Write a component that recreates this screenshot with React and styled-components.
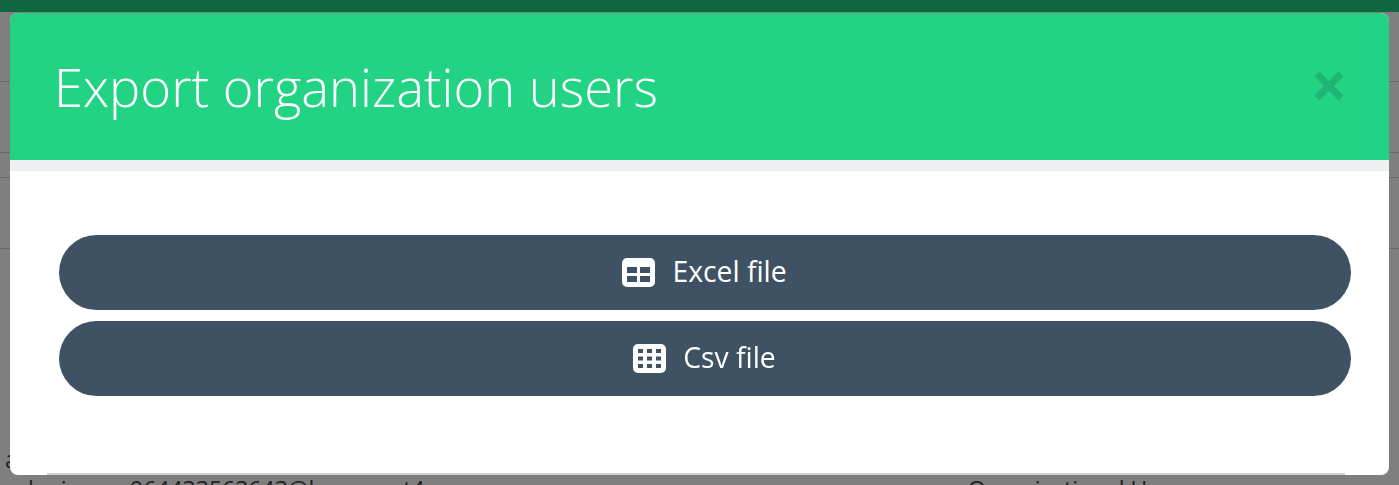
import React from "react";
import styled, { createGlobalStyle } from "styled-components";

const GlobalStyle = createGlobalStyle`
  html, body {
    margin: 0;
    height: 100%;
    overflow: hidden;
    background: #fff;
    font-family: "Open Sans", "Liberation Sans", sans-serif;
  }
`;

const Page = styled.div`
  height: 485px;
  overflow: hidden;
`;

const TopBar = styled.div`
  height: 12px;
  background: #20cc80;
`;

const BackRow = styled.div`
  height: ${(p) => p.$height}px;
  border-bottom: 1px solid #d0d0d0;
  box-sizing: border-box;
`;

const BackText = styled.div`
  display: grid;
  grid-template-columns: 102px 838px 1fr;
  padding: ${(p) => p.$top}px 0 0 ${(p) => p.$left}px;
  font-size: 23px;
  line-height: 28px;
  color: #444;
  white-space: nowrap;
`;

const Backdrop = styled.div`
  position: fixed;
  inset: 0;
  display: flex;
  padding: 13px 10px 10px;
  box-sizing: border-box;
  background: rgba(0, 0, 0, 0.5);
`;

const Modal = styled.div`
  flex: 1;
  display: flex;
  flex-direction: column;
  background: #fff;
  border-radius: 8px;
  overflow: hidden;
`;

const Header = styled.div`
  height: 147px;
  flex: none;
  display: flex;
  align-items: center;
  justify-content: space-between;
  padding: 0 44px;
  box-sizing: border-box;
  background: #22d384;
`;

const Title = styled.h4`
  margin: 1px 0 0;
  font-size: 52.500px;
  font-weight: 300;
  line-height: 1;
  color: #fff;
`;

const CloseIcon = styled.svg`
  width: 32px;
  height: 32px;
  flex: none;
  margin-top: -2px;
`;

const Strip = styled.div`
  height: 11px;
  flex: none;
  background: #eff0f1;
  border-bottom: 1px solid #dff2ea;
  box-sizing: border-box;
`;

const Body = styled.div`
  flex: 1;
  display: flex;
  flex-direction: column;
  gap: 11px;
  padding: 64px 38px 0 49px;
`;

const ExportButton = styled.button`
  height: 75px;
  display: flex;
  align-items: center;
  justify-content: center;
  gap: 17px;
  padding: 0 1px 0 0;
  border: 0;
  border-radius: 38px;
  background: #3e5264;
  color: #fff;
  font-family: inherit;
  font-size: 28.300px;
  cursor: pointer;
`;

const ButtonLabel = styled.span`
  line-height: 36px;
  margin-top: -3px;
`;

const FileIcon = styled.svg`
  width: 33px;
  height: 29px;
  flex: none;
`;

const FooterLine = styled.div`
  height: 2px;
  flex: none;
  margin: 0 44px 0 37px;
  background: #d2d2d2;
`;

function ExcelIcon() {
  return (
    <FileIcon viewBox="0 0 33 29">
      <path
        fill="#fff"
        fillRule="evenodd"
        d="M5 0h23a5 5 0 0 1 5 5v19a5 5 0 0 1-5 5H5a5 5 0 0 1-5-5V5a5 5 0 0 1 5-5zM5 9v6h10V9zM18 9v6h10V9zM5 18v6h10v-6zM18 18v6h10v-6z"
      />
    </FileIcon>
  );
}

function CsvIcon() {
  return (
    <FileIcon viewBox="0 0 33 29">
      <path
        fill="#fff"
        fillRule="evenodd"
        d="M5 0h23a5 5 0 0 1 5 5v19a5 5 0 0 1-5 5H5a5 5 0 0 1-5-5V5a5 5 0 0 1 5-5zM5 5v4h5V5zM14 5v4h5V5zM23 5v4h5V5zM5 12.500v4h5v-4zM14 12.500v4h5v-4zM23 12.500v4h5v-4zM5 20v4h5v-4zM14 20v4h5v-4zM23 20v4h5v-4z"
      />
    </FileIcon>
  );
}

export default function App() {
  return (
    <Page>
      <GlobalStyle />
      <TopBar />
      <BackRow $height={70} />
      <BackRow $height={71} />
      <BackRow $height={25} />
      <BackRow $height={71} />
      <BackText $top={196} $left={5}>
        <span>a</span>
      </BackText>
      <BackText $top={2} $left={28}>
        <span>lanin</span>
        <span>964433563643@lmanonet4</span>
        <span>Organizational U</span>
      </BackText>
      <Backdrop>
        <Modal>
          <Header>
            <Title>Export organization users</Title>
            <CloseIcon viewBox="0 0 32 32">
              <path d="M4 4l24 24M28 4L4 28" stroke="#1fb574" strokeWidth="7" fill="none" />
            </CloseIcon>
          </Header>
          <Strip />
          <Body>
            <ExportButton>
              <ExcelIcon />
              <ButtonLabel>Excel file</ButtonLabel>
            </ExportButton>
            <ExportButton>
              <CsvIcon />
              <ButtonLabel>Csv file</ButtonLabel>
            </ExportButton>
          </Body>
          <FooterLine />
        </Modal>
      </Backdrop>
    </Page>
  );
}
